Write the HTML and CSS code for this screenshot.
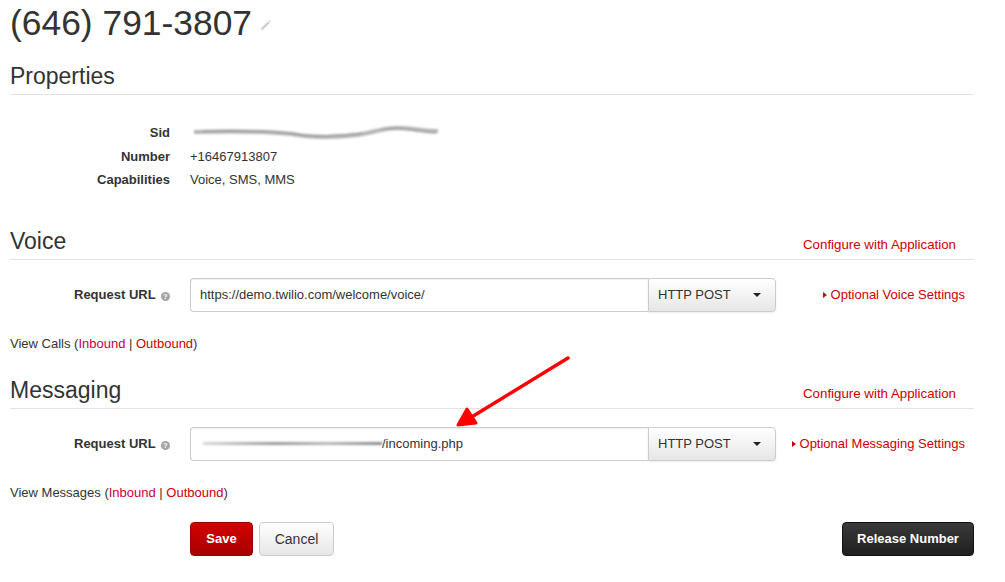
FILE: index.html
```html
<!DOCTYPE html>
<html lang="en">

<head>
    <meta charset="UTF-8">
    <title>(646) 791-3807</title>
    <link rel="stylesheet" href="styles.css">
</head>

<body>
    <div class="page">
        <h1 class="number">(646) 791-3807
            <svg class="edit-icon" width="11" height="11" viewBox="0 0 11 11">
                <path d="M1 10 L1.6 7.6 L7.8 1.4 L9.6 3.2 L3.4 9.4 Z" fill="#d0d0d0" />
                <path d="M8.4 0.8 L9.2 0 L11 1.8 L10.2 2.6 Z" fill="#d0d0d0" />
            </svg>
        </h1>

        <section class="section">
            <div class="section-head props-head">
                <h2>Properties</h2>
            </div>
            <div class="props">
                <div class="prop">
                    <span class="prop-label">Sid</span>
                    <span class="prop-value">
                        <svg class="smudge" width="248" height="20" viewBox="0 0 248 20">
                            <path d="M2 9 C40 8 80 9 100 11 C120 15 140 15 165 12 C185 9 190 5 205 5 C220 5 230 8 246 8"
                                stroke="#b4b4b4" stroke-width="4" fill="none" />
                            <path d="M10 8 C50 7 90 8 110 12 C130 14 150 12 170 10" stroke="#8a8a8a"
                                stroke-width="1.2" fill="none" />
                            <path d="M190 6 C210 4 225 9 244 10" stroke="#999" stroke-width="1.2" fill="none" />
                        </svg>
                    </span>
                </div>
                <div class="prop">
                    <span class="prop-label">Number</span>
                    <span class="prop-value">+16467913807</span>
                </div>
                <div class="prop">
                    <span class="prop-label">Capabilities</span>
                    <span class="prop-value">Voice, SMS, MMS</span>
                </div>
            </div>
        </section>

        <section class="section voice">
            <div class="section-head">
                <h2>Voice</h2>
                <a class="config-link" href="#">Configure with Application</a>
            </div>
            <div class="field-row">
                <label class="field-label">Request URL <span class="help">?</span></label>
                <div class="input-group">
                    <div class="url-input">https://demo.twilio.com/welcome/voice/</div>
                    <div class="method">HTTP POST <span class="caret"></span></div>
                </div>
                <a class="optional" href="#"><span class="tri"></span>Optional Voice Settings</a>
            </div>
            <p class="view-links">View Calls (<a class="in" href="#">Inbound</a> | <a href="#">Outbound</a>)</p>
        </section>

        <section class="section messaging">
            <div class="section-head">
                <h2>Messaging</h2>
                <a class="config-link" href="#">Configure with Application</a>
            </div>
            <div class="field-row">
                <label class="field-label">Request URL <span class="help">?</span></label>
                <div class="input-group">
                    <div class="url-input"><span class="url-smudge"></span>/incoming.php</div>
                    <div class="method">HTTP POST <span class="caret"></span></div>
                </div>
                <a class="optional" href="#"><span class="tri"></span>Optional Messaging Settings</a>
            </div>
            <p class="view-links">View Messages (<a class="in" href="#">Inbound</a> | <a href="#">Outbound</a>)</p>
        </section>

        <div class="actions">
            <button class="btn btn-save">Save</button>
            <button class="btn btn-cancel">Cancel</button>
            <button class="btn btn-release">Release Number</button>
        </div>
    </div>

    <svg class="annotation" width="1005" height="582" viewBox="0 0 1005 582">
        <line x1="568" y1="358" x2="470" y2="418" stroke="#ff0000" stroke-width="3.5" stroke-linecap="round" />
        <polygon points="458,425 476,423 467,409" fill="#ff0000" stroke="#ff0000" stroke-width="3"
            stroke-linejoin="round" />
    </svg>
</body>

</html>
```

FILE: styles.css
```css
body {
    margin: 0;
    font-family: "Liberation Sans", Arial, sans-serif;
    font-size: 13px;
    color: #333;
    background-color: white;
}

a {
    color: #cc0000;
    text-decoration: none;
}

.page {
    margin-left: 10px;
    width: 964px;
    padding-top: 3px;
}

.number {
    margin: 0;
    font-size: 35.4px;
    line-height: 40px;
    font-weight: normal;
}

.edit-icon {
    vertical-align: 4px;
    margin-left: -2px;
}

.section-head {
    display: flex;
    justify-content: space-between;
    align-items: baseline;
    border-bottom: 1px solid #e3e3e3;
    padding-bottom: 4px;
}

.section-head h2 {
    margin: 0;
    font-size: 23px;
    line-height: 28px;
    font-weight: normal;
}

.props-head {
    margin-top: 19px;
}

.config-link {
    padding-right: 18px;
    font-size: 13.3px;
}

.props {
    margin-top: 26px;
}

.prop {
    display: flex;
    line-height: 23.5px;
}

.prop-label {
    width: 160px;
    margin-right: 20px;
    text-align: right;
    font-weight: bold;
}

.prop-value {
    display: flex;
    align-items: center;
}

.smudge {
    margin-left: 2px;
    filter: blur(1.2px);
}

.voice {
    margin-top: 35px;
}

.messaging {
    margin-top: 23px;
}

.field-row {
    display: flex;
    align-items: center;
    margin-top: 18px;
}

.field-label {
    width: 160px;
    margin-right: 20px;
    text-align: right;
    font-weight: bold;
}

.help {
    display: inline-block;
    width: 9px;
    height: 9px;
    border-radius: 50%;
    background-color: #a5a5a5;
    color: white;
    font-size: 7px;
    line-height: 9px;
    text-align: center;
    vertical-align: 0;
    margin-left: 2px;
}

.input-group {
    display: flex;
    width: 586px;
    height: 34px;
}

.url-input {
    flex: 1;
    display: flex;
    align-items: center;
    padding-left: 9px;
    border: 1px solid #cccccc;
    border-right: none;
    border-radius: 4px 0 0 4px;
    box-shadow: inset 0 1px 1px rgba(0, 0, 0, 0.06);
    font-size: 13px;
}

.url-smudge {
    display: inline-block;
    width: 179px;
    height: 3px;
    margin-left: 3px;
    background: linear-gradient(to right, #d8d8d8, #9a9a9a 40%, #b8b8b8 70%, #8a8a8a);
    filter: blur(1px);
}

.method {
    width: 128px;
    box-sizing: border-box;
    display: flex;
    align-items: center;
    justify-content: space-between;
    padding: 0 14px 0 9px;
    border: 1px solid #cccccc;
    border-radius: 0 4px 4px 0;
    background: linear-gradient(#ffffff, #e6e6e6);
    box-shadow: 0 1px 2px rgba(0, 0, 0, 0.08);
}

.caret {
    width: 0;
    height: 0;
    border-left: 4px solid transparent;
    border-right: 4px solid transparent;
    border-top: 4px solid #222;
}

.optional {
    flex: 1;
    text-align: right;
    padding-right: 9px;
}

.tri {
    display: inline-block;
    width: 0;
    height: 0;
    border-top: 3.5px solid transparent;
    border-bottom: 3.5px solid transparent;
    border-left: 4px solid #cc0000;
    margin-right: 4px;
    vertical-align: 1px;
}

.view-links {
    margin: 23px 0 0;
    line-height: 18px;
}

.view-links .in {
    color: #c8003c;
}

.actions {
    display: flex;
    align-items: center;
    margin-top: 20px;
    padding-left: 180px;
}

.btn {
    height: 34px;
    border-radius: 4px;
    font-family: "Liberation Sans", Arial, sans-serif;
    font-size: 13px;
    padding: 0;
    cursor: pointer;
}

.btn-save {
    width: 63px;
    color: white;
    font-weight: bold;
    border: 1px solid #9a0000;
    background: linear-gradient(#d40000, #a60000);
}

.btn-cancel {
    width: 75px;
    margin-left: 6px;
    color: #333;
    border: 1px solid #cccccc;
    background: linear-gradient(#ffffff, #e6e6e6);
    font-size: 14px;
}

.btn-release {
    width: 132px;
    margin-left: auto;
    color: white;
    font-weight: bold;
    border: 1px solid #111;
    background: linear-gradient(#3a3a3a, #1f1f1f);
}

.annotation {
    position: absolute;
    left: 0;
    top: 0;
    pointer-events: none;
}
```
